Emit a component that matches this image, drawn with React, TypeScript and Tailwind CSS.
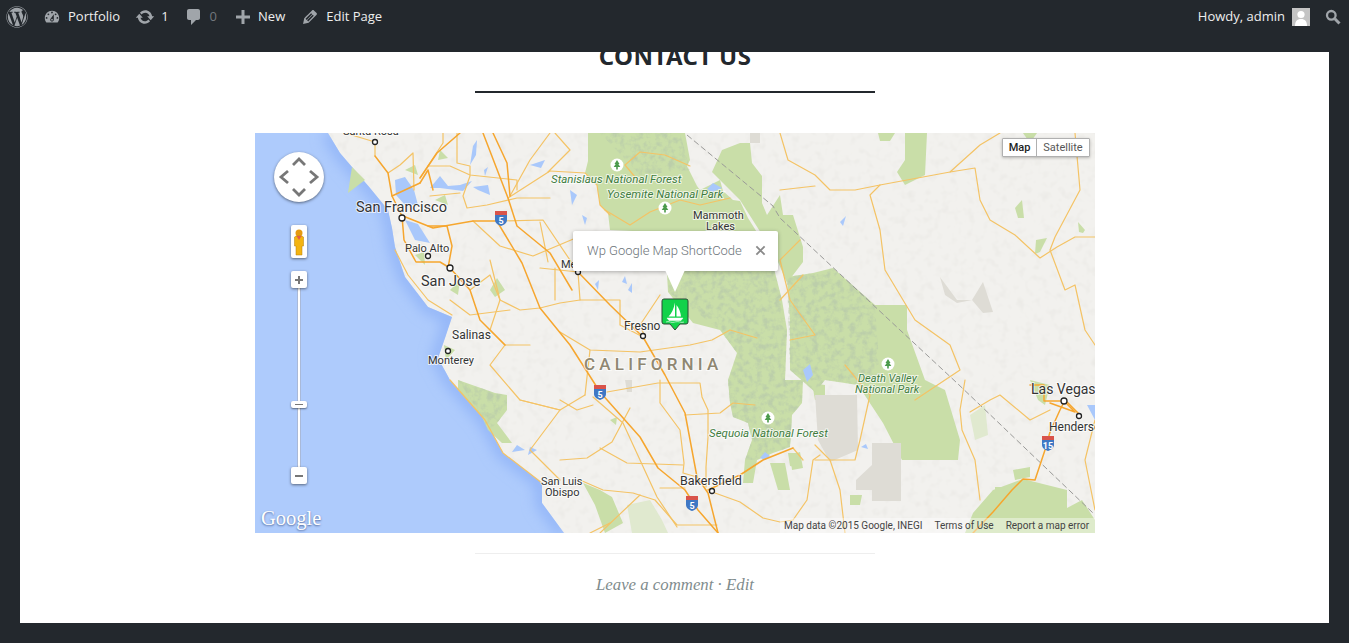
import React from 'react';
import { FaWordpress } from 'react-icons/fa';

const Dash: React.FC<{ d: string; className: string }> = ({ d, className }) => (
  <svg viewBox="0 0 20 20" className={className} fill="currentColor">
    <path fillRule="evenodd" clipRule="evenodd" d={d} />
  </svg>
);

const AdminBar = () => (
  <div className="h-[52px] flex items-start justify-between text-[13px] text-[#eeeeee] font-['Open_Sans',sans-serif]">
    <div className="h-[33px] flex items-center text-[#a0a5aa]">
      <FaWordpress className="ml-[6px] w-[22px] h-[22px]" />
      <Dash className="ml-[15px] w-[18px] h-[18px]" d="M3.76 16h12.48c1.1-1.37 1.76-3.11 1.76-5 0-4.42-3.58-8-8-8s-8 3.58-8 8c0 1.89.66 3.63 1.76 5zM10 4c.55 0 1 .45 1 1s-.45 1-1 1-1-.45-1-1 .45-1 1-1zM6 6c.55 0 1 .45 1 1s-.45 1-1 1-1-.45-1-1 .45-1 1-1zm8 0c.55 0 1 .45 1 1s-.45 1-1 1-1-.45-1-1 .45-1 1-1zm-5.37 5.55L12 7v6c0 1.1-.9 2-2 2s-2-.9-2-2c0-.57.24-1.08.63-1.45zM4 10c.55 0 1 .45 1 1s-.45 1-1 1-1-.45-1-1 .45-1 1-1zm12 0c.55 0 1 .45 1 1s-.45 1-1 1-1-.45-1-1 .45-1 1-1zm-5 3c0-.55-.45-1-1-1s-1 .45-1 1 .45 1 1 1 1-.45 1-1z" />
      <span className="ml-[7px] text-[#eeeeee]">Portfolio</span>
      <Dash className="ml-[15px] w-[20px] h-[20px]" d="M10.2 3.28c3.53 0 6.43 2.61 6.92 6h2.08l-3.5 4-3.5-4h2.32c-.45-1.97-2.21-3.45-4.32-3.45-1.45 0-2.73.71-3.54 1.78L4.95 5.66C6.23 4.2 8.11 3.28 10.2 3.28zm-.4 13.44c-3.52 0-6.43-2.61-6.92-6H.8l3.5-4c1.17 1.33 2.33 2.67 3.5 4H5.48c.45 1.97 2.21 3.45 4.32 3.45 1.45 0 2.73-.71 3.54-1.78l1.71 1.95c-1.28 1.46-3.15 2.38-5.25 2.38z" />
      <span className="ml-[6px] text-[#eeeeee]">1</span>
      <Dash className="ml-[15px] w-[20px] h-[20px]" d="M5 2h9c1.1 0 2 .9 2 2v7c0 1.1-.9 2-2 2h-2l-5 5v-5H5c-1.1 0-2-.9-2-2V4c0-1.1.9-2 2-2z" />
      <span className="ml-[6px] text-[#72777c]">0</span>
      <Dash className="ml-[16px] w-[20px] h-[20px]" d="M17 8.5v3h-5.5V17h-3v-5.5H3v-3h5.5V3h3v5.5H17z" />
      <span className="ml-[5px] text-[#eeeeee]">New</span>
      <Dash className="ml-[15px] w-[20px] h-[20px]" d="M13.89 3.39l2.71 2.72c.46.46.42 1.24.03 1.64l-8.01 8.02-5.56 1.16 1.16-5.58s7.6-7.63 8.01-8.03c.39-.39 1.22-.39 1.66.07zm-2.73 2.79l-5.59 5.61 1.11 1.11 5.54-5.65zm-2.97 8.23l5.58-5.6-1.07-1.08-5.59 5.6z" />
      <span className="ml-[6px] text-[#eeeeee]">Edit Page</span>
    </div>
    <div className="h-[33px] flex items-center pr-2">
      <span>Howdy, admin</span>
      <span className="ml-[7px] w-[18px] h-[18px] bg-[#c4c4c4] overflow-hidden">
        <svg viewBox="0 0 18 18" className="w-full h-full" fill="#ffffff">
          <circle cx="9" cy="6.5" r="3.6" />
          <path d="M3 18c0-4.5 2-7 6-7s6 2.500 6 7z" />
        </svg>
      </span>
      <svg viewBox="0 0 16 16" className="ml-[15px] w-[16px] h-[16px] text-[#a0a5aa]" fill="none" stroke="currentColor">
        <circle cx="6.300" cy="6.300" r="4.300" strokeWidth="2.300" />
        <path d="M9.800 9.800L14.500 14.500" strokeWidth="3" />
      </svg>
    </div>
  </div>
);

const Place: React.FC<{ x: number; y: number; className: string; children: React.ReactNode }> = ({ x, y, className, children }) => (
  <text x={x} y={y} className={`[paint-order:stroke] stroke-white/70 stroke-[2px] ${className}`}>{children}</text>
);

const Dot: React.FC<{ x: number; y: number; r?: number }> = ({ x, y, r = 2.500 }) => (
  <circle cx={x} cy={y} r={r} fill="#ffffff" stroke="#222222" strokeWidth="1.300" />
);

const Shield: React.FC<{ x: number; y: number; n: string }> = ({ x, y, n }) => (
  <g>
    <path d={`M${x - 6} ${y - 7}h12v4h-12z`} fill="#d9534a" />
    <path d={`M${x - 6} ${y - 3}h12v5c0 3-3 5-6 6-3-1-6-3-6-6z`} fill="#3f78c4" />
    <text x={x} y={y + 6} textAnchor="middle" className="text-[9px] font-bold fill-white">{n}</text>
  </g>
);

const Tree: React.FC<{ x: number; y: number }> = ({ x, y }) => (
  <g>
    <circle cx={x} cy={y} r="6.500" fill="#ffffff" />
    <path d={`M${x} ${y - 5}l2.500 4h-1.200l2 3h-2.500v2.500h-1.600v-2.500h-2.500l2-3h-1.200z`} fill="#4b9a4b" />
  </g>
);

const majorRoads = [
  'M375 156L388 173L392 196L402 216L404 240L416 262L440 262L450 268L470 290L480 320L505 345',
  'M420 178L437 153L460 133',
  'M483 133L508 198L517 226L550 253L572 290',
  'M493 133L507 163L510 196',
  'M498 223L522 263L540 308L570 345L600 392L640 437L658 468L685 490L698 510L718 533',
  'M578 272L610 305L643 337L665 375L685 413L697 477L708 493L718 533',
  'M428 226L447 226L452 246L448 268',
  'M403 216L433 228L473 221L497 221',
  'M420 183L428 170L433 190',
  'M392 196L420 183',
  'M708 490L740 475L763 460L793 448',
  'M973 533L993 512L1012 490L1023 479L1035 480L1045 450L1050 432',
  'M1050 432L1060 410L1065 400L1080 415',
  'M1064 401L1044 401L1044 385L1030 385',
  'M1050 403L1075 412L1064 401',
];

const minorRoads = [
  'M345 133L375 142L375 156',
  'M388 173L400 165L413 153L414 190',
  'M443 133L443 143L420 178',
  'M428 166L450 166L470 175L517 180L517 190',
  'M457 133L457 163L470 166L470 176L463 196L467 208L487 205L517 198L550 198',
  'M430 196L460 193',
  'M508 198L550 171',
  'M473 221L500 246L533 256L590 232',
  'M500 221L543 220L578 272',
  'M510 196L530 160L550 133',
  'M550 171L585 173L597 185L600 205L610 215',
  'M555 133L570 150L548 172',
  'M640 183L625 165L640 152L665 155L690 166',
  'M605 210L630 225L650 212L680 200L700 205L730 198',
  'M540 268L578 272L580 300L620 300L620 325L643 337',
  'M540 308L560 303L580 300',
  'M555 268L555 300',
  'M540 222L548 262',
  'M560 332L590 350L640 352L690 345L712 340L730 330L757 338',
  'M590 350L585 395',
  'M660 295L640 325L645 337',
  'M607 392L658 383L700 383L702 397L708 410L708 437L706 467L706 487',
  'M685 415L720 413L733 403L755 405',
  'M593 397L623 423L640 460L657 497L677 527',
  'M630 408L612 442L587 458L560 460',
  'M600 448L627 463L683 465',
  'M660 380L660 403L680 430L684 463L683 473L697 477',
  'M560 400L577 410L593 405',
  'M580 480L603 490L633 493L655 500L677 525L717 525',
  'M660 488L685 488',
  'M715 493L740 502L763 518L780 522L793 520L807 500L813 460L820 455',
  'M793 448L803 460',
  'M610 523L590 533',
  'M640 495L600 533',
  'M780 133L788 160L815 175L830 190L855 190L880 185L950 172L980 145L1000 133',
  'M780 190L815 186',
  'M880 185L870 195L880 230L885 270L915 320L950 345L960 370L915 400',
  'M950 172L975 168L980 200L990 220L1015 235L1040 258L1057 247L1075 237L1095 237',
  'M1075 133L1080 190L1055 237L1050 250L1065 290L1075 285L1085 330L1095 345',
  'M790 340L815 335L790 300L780 260L800 240',
  'M803 275L780 300',
  'M815 445L830 460L840 490L845 533',
  'M845 365L870 395L860 440L855 460L815 460',
  'M965 380L960 410L962 430L975 460L980 500',
  'M970 412L990 400L1000 395L1030 420L1050 410',
  'M1095 420L1085 460L1095 510',
  'M490 260L500 300L520 310L540 308',
  'M500 300L490 330L505 345L530 345',
  'M505 345L490 365L520 400L560 410L585 395',
  'M520 400L560 410L530 450L560 480',
  'M450 300L470 315L510 310',
  'M450 380L485 420L503 453L542 483',
  'M395 250L408 275L428 300L452 315',
  'M470 290L490 275L500 300',
];

const lakes = [
  'M395 180L405 177L414 190L418 205L405 205L396 195z',
  'M405 220L418 224L430 243L415 240z',
  'M430 188L440 176L448 186L460 185L472 181L463 191L440 188z',
  'M473 146L477 140L476 155L470 165z',
  'M473 187L488 185L490 195L478 190z',
  'M484 170L488 167L485 176z',
  'M530 165L545 160L541 168z',
  'M713 183L722 188L712 192L707 189z',
  'M595 284L599 280L598 290z',
  'M622 282L625 276L627 284z',
  'M640 236L646 232L644 242z',
  'M803 370L810 364L813 375L807 382z',
  'M840 222L846 216L843 226z',
  'M760 458L765 452L770 456L765 460z',
  'M1087 405L1095 405L1095 420z',
  'M517 445L525 450L512 452zM530 447L537 450L528 455z',
  'M861 447L866 444L868 449z',
  'M570 190L577 195L572 205z',
  'M582 215L587 218L585 225z',
  'M628 290L632 283L632 293z',
  'M608 250L613 255L608 260z',
];

const COAST = 'M328 133L340 153L352 167L370 188L388 210L392 228L395 247L405 277L428 307L452 317L445 338L438 358L450 380L485 420L503 453L542 483L542 503L564 533';

const MapDrawing = () => (
  <svg viewBox="255 133 840 400" className="absolute inset-0 w-full h-full font-['Roboto',sans-serif]">
    <defs>
      <filter id="hills" x="0" y="0" width="100%" height="100%">
        <feTurbulence type="fractalNoise" baseFrequency="0.16" numOctaves="3" seed="4" />
        <feColorMatrix values="0 0 0 0 0.50  0 0 0 0 0.62  0 0 0 0 0.40  0 0 0 3 -1.300" />
        <feComposite in2="SourceAlpha" operator="in" />
      </filter>
      <filter id="grain" x="0" y="0" width="100%" height="100%">
        <feTurbulence type="fractalNoise" baseFrequency="0.12" numOctaves="2" seed="9" />
        <feColorMatrix values="0 0 0 0 0.82  0 0 0 0 0.81  0 0 0 0 0.78  0 0 0 2 -1" />
        <feComposite in2="SourceAlpha" operator="in" />
      </filter>
      <filter id="soft"><feGaussianBlur stdDeviation="7" /></filter>
      <clipPath id="sea">
        <path d={`${COAST}L255 533L255 133z`} />
      </clipPath>
    </defs>

    <rect x="255" y="133" width="840" height="400" fill="#f2f1ee" />
    <rect x="255" y="133" width="840" height="400" filter="url(#grain)" />

    <path d={`${COAST}L255 533L255 133z`} fill="#aecbfc" />
    <g clipPath="url(#sea)">
      <path d={COAST} fill="none" stroke="#8fb2f7" strokeWidth="12" filter="url(#soft)" />
    </g>

    {/* parks and forests */}
    <g fill="#c9dea8">
      <path d="M588 133L685 133L690 160L687 166L697 186L700 190L720 180L723 191L733 200L740 201L748 218L770 253L782 300L787 330L785 380L803 380L802 403L792 415L790 447L773 453L757 460L753 483L743 483L745 460L752 440L748 423L733 417L730 403L728 380L737 353L720 330L693 323L668 292L667 273L655 232L610 230L608 213L600 205L597 185L585 173L588 161z" />
      <path d="M722 150L740 143L750 143L752 163L762 176L762 203L767 215L780 195L783 215L793 215L803 247L803 262L787 283L775 255L740 200L712 172z" />
      <path d="M787 277L813 273L833 268L875 305L907 305L907 330L925 380L945 390L960 440L958 460L902 460L883 423L858 385L825 380L815 392L790 370L790 320z" />
      <path d="M897 172L905 160L905 133L927 133L925 175L905 185z" />
      <path d="M878 133L895 133L890 141L880 141z" />
      <path d="M1015 208L1022 200L1024 218L1018 218z" />
      <path d="M1036 240L1047 238L1040 252L1035 254z" />
      <path d="M1078 222L1085 230L1083 233L1079 232z" />
      <path d="M973 513L993 490L1023 479L1067 490L1067 508L1082 500L1095 520L1095 533L965 533z" />
      <path d="M458 380L495 393L507 395L507 410L497 423L512 443L502 443L488 430L482 417L458 390z" />
      <path d="M352 167L365 180L348 193z" />
      <path d="M583 483L600 490L612 497L623 523L605 533L595 505z" />
      <path d="M770 463L785 463L790 490L778 490z" />
      <path d="M790 455L800 452L803 468L792 470z" />
      <path d="M812 383L825 385L825 398L815 400z" />
      <path d="M788 453L800 453L800 468L790 466z" />
      <path d="M995 487L1005 487L1002 495L995 495z" />
      <path d="M1013 470L1030 467L1030 477L1015 480z" />
      <path d="M850 495L862 495L860 505L850 505z" />
      <path d="M1030 380L1050 385L1045 405L1038 400z" />
      <path d="M415 255L424 252L425 265z" />
      <path d="M444 345L455 350L446 360z" />
      <path d="M490 290L497 278L505 290L495 297z" />
      <path d="M405 170L415 165L418 175z" />
      <path d="M440 150L448 158L438 160z" />
      <path d="M435 200L445 195L448 205z" />
      <path d="M450 290L460 280L458 295z" />
      <path d="M1023 133L1037 133L1030 143z" />
      <path d="M610 420L617 417L616 425z" />
    </g>
    <g fill="#e0e9cf">
      <path d="M627 505L650 500L662 520L668 533L632 533z" />
      <path d="M970 415L985 405L988 435L975 440z" />
    </g>
    <g filter="url(#hills)">
      <path d="M680 300L668 292L667 273L770 253L782 300L787 330L785 380L803 380L802 403L792 415L790 447L773 453L757 460L745 460L752 440L748 423L733 417L730 403L728 380L737 353L720 330z" />
      <path d="M787 277L813 273L833 268L875 305L880 375L858 385L825 380L815 392L790 370z" />
      <path d="M600 133L680 133L690 170L640 175z" />
      <path d="M458 380L495 393L507 395L507 410L497 423L488 430L482 417z" />
    </g>

    {/* dry lake beds and military land */}
    <g fill="#dedcd5">
      <path d="M815 395L857 395L858 450L830 462L818 440z" />
      <path d="M872 443L901 443L901 501L872 501L872 490L856 490L856 480L872 465z" />
      <path d="M940 277L957 300L972 300L983 282L993 312L983 313L972 300L957 303L945 295z" />
      <path d="M750 133L760 133L760 143L750 143z" />
      <path d="M625 380L632 380L632 392L627 392z" />
    </g>
    <g fill="#a9c8fb">
      {lakes.map((d, i) => <path key={i} d={d} />)}
    </g>

    {/* state line */}
    <path d="M687 135L773 206L780 218L900 330L957 383L1093 513" fill="none" stroke="#9a9a98" strokeWidth="1" strokeDasharray="6 3" />

    <g fill="none" strokeLinejoin="round" strokeLinecap="round">
      <g stroke="#f4c365" strokeWidth="1.200">
        {minorRoads.map((d, i) => <path key={i} d={d} />)}
      </g>
      <g stroke="#f6a62e" strokeWidth="1.500">
        {majorRoads.map((d, i) => <path key={i} d={d} />)}
      </g>
    </g>

    <Shield x={501} y={218} n="5" />
    <Shield x={600} y={392} n="5" />
    <Shield x={692} y={503} n="5" />
    <Shield x={1048} y={443} n="15" />

    <Tree x={617} y={165} />
    <Tree x={665} y={208} />
    <Tree x={768} y={418} />
    <Tree x={888} y={364} />

    <g className="fill-[#333333]">
      <Place x={343} y={135} className="text-[11px]">Santa Rosa</Place>
      <Place x={356} y={212} className="text-[14.500px]">San Francisco</Place>
      <Place x={405} y={252} className="text-[11px]">Palo Alto</Place>
      <Place x={421} y={286} className="text-[14.500px]">San Jose</Place>
      <Place x={452} y={339} className="text-[12px]">Salinas</Place>
      <Place x={428} y={364} className="text-[11px]">Monterey</Place>
      <Place x={561} y={268} className="text-[11px]">Merced</Place>
      <Place x={624} y={330} className="text-[12px]">Fresno</Place>
      <Place x={693} y={219} className="text-[11px]">Mammoth</Place>
      <Place x={706} y={230} className="text-[11px]">Lakes</Place>
      <Place x={541} y={485} className="text-[11px]">San Luis</Place>
      <Place x={545} y={496} className="text-[11px]">Obispo</Place>
      <Place x={680} y={485} className="text-[12.500px]">Bakersfield</Place>
      <Place x={1031} y={394} className="text-[14px]">Las Vegas</Place>
      <Place x={1049} y={431} className="text-[12px]">Henderson</Place>
    </g>
    <g className="fill-[#3f7d3f] italic">
      <Place x={551} y={183} className="text-[11.500px]">Stanislaus National Forest</Place>
      <Place x={607} y={198} className="text-[11.500px]">Yosemite National Park</Place>
      <Place x={709} y={437} className="text-[11.500px]">Sequoia National Forest</Place>
      <Place x={858} y={382} className="text-[11px]">Death Valley</Place>
      <Place x={855} y={393} className="text-[11px]">National Park</Place>
    </g>
    <Place x={584} y={370} className="fill-[#8f8772] text-[17px] font-medium tracking-[4.200px]">CALIFORNIA</Place>

    <Dot x={375} y={142} />
    <Dot x={402} y={218} r={3} />
    <Dot x={428} y={256} />
    <Dot x={450} y={268} r={3} />
    <Dot x={448} y={351} />
    <Dot x={578} y={272} />
    <Dot x={643} y={336} />
    <Dot x={712} y={491} />
    <Dot x={1064} y={401} r={3} />
    <Dot x={1079} y={416} />
  </svg>
);

const Marker = () => (
  <svg viewBox="0 0 28 34" className="absolute left-[406px] top-[165px] w-[28px] h-[34px]">
    <path d="M3 1h22a2 2 0 0 1 2 2v21a2 2 0 0 1-2 2h-6l-5 6-5-6H3a2 2 0 0 1-2-2V3a2 2 0 0 1 2-2z" fill="#12d24a" stroke="#2b4a35" strokeWidth="1" />
    <path d="M14 4.500v14H7.500c3-3 5.500-8 6.500-14zM15.500 7c2.500 3 4 7 4.500 11.500h-4.500z" fill="#ffffff" />
    <path d="M6 20h16l-2 2.500H8zM5 24c3-1 5 1 9 0s6 1 9 0" fill="#ffffff" stroke="#ffffff" strokeWidth="0.500" />
  </svg>
);

const InfoWindow = () => (
  <div className="absolute left-[318px] top-[98px] w-[205px] h-[40px] bg-white rounded-[2px] shadow-[0_1px_4px_rgba(0,0,0,0.3)] flex items-center justify-between pl-[14px] pr-[12px] font-['Roboto',sans-serif] font-light text-[13px] text-[#6c7479]">
    <span>Wp Google Map ShortCode</span>
    <svg viewBox="0 0 12 12" className="w-[11px] h-[11px] mb-[2px]" stroke="#8a8a8a" strokeWidth="2">
      <path d="M1.500 1.500L10.500 10.500M10.500 1.500L1.500 10.500" />
    </svg>
    <svg viewBox="0 0 20 22" className="absolute left-[92px] top-[39px] w-[20px] h-[22px]">
      <path d="M0 0H20L10 22z" fill="#ffffff" />
    </svg>
  </div>
);

const PanControl = () => (
  <div className="absolute left-[19px] top-[19px] w-[50px] h-[50px] rounded-full bg-white shadow-[0_1px_3px_rgba(0,0,0,0.5)]">
    <svg viewBox="0 0 50 50" className="w-full h-full" fill="none" stroke="#777777" strokeWidth="2.800">
      <path d="M19 13l6-6 6 6M19 37l6 6 6-6M14 19l-7 6 7 6M36 19l7 6-7 6" />
    </svg>
  </div>
);

const ZoomControl = () => (
  <>
    <div className="absolute left-[36px] top-[92px] w-[16px] h-[33px] bg-white rounded-[2px] shadow-[0_1px_3px_rgba(0,0,0,0.5)]">
      <svg viewBox="0 0 16 33" className="w-full h-full">
        <circle cx="8" cy="8" r="3.500" fill="#e59a12" />
        <path d="M5 11h6l1.500 1v9h-1.500v9h-6v-9H3.500v-9z" fill="#f3b412" stroke="#b57e0e" strokeWidth="0.500" />
        <path d="M5.500 11h5L8 15z" fill="#e35b4d" />
      </svg>
    </div>
    <div className="absolute left-[42px] top-[154px] w-[4px] h-[181px] bg-white border-x border-[#a9b9d8]" />
    <div className="absolute left-[36px] top-[138px] w-[16px] h-[17px] bg-white rounded-[2px] shadow-[0_1px_3px_rgba(0,0,0,0.5)] flex items-center justify-center">
      <svg viewBox="0 0 8 8" className="w-[8px] h-[8px]" fill="#777777"><path d="M3 0h2v3h3v2H5v3H3V5H0V3h3z" /></svg>
    </div>
    <div className="absolute left-[36px] top-[268px] w-[16px] h-[7px] bg-white rounded-[2px] shadow-[0_1px_2px_rgba(0,0,0,0.5)] flex items-center justify-center">
      <div className="w-[8px] h-px bg-[#777777]" />
    </div>
    <div className="absolute left-[36px] top-[334px] w-[16px] h-[17px] bg-white rounded-[2px] shadow-[0_1px_3px_rgba(0,0,0,0.5)] flex items-center justify-center">
      <div className="w-[8px] h-[2px] bg-[#777777]" />
    </div>
  </>
);

const MapType = () => (
  <div className="absolute left-[747px] top-[5px] h-[19px] flex bg-white border border-[#b0b0b0] rounded-[1px] shadow-[0_1px_3px_rgba(0,0,0,0.25)] text-[11px] leading-[17px] font-['Roboto',sans-serif]">
    <span className="w-[34px] text-center font-medium text-[#222222] border-r border-[#b0b0b0]">Map</span>
    <span className="w-[52px] text-center text-[#565656]">Satellite</span>
  </div>
);

const GoogleMap = () => (
  <div className="relative w-[840px] h-[400px] mt-[40px] overflow-hidden shrink-0">
    <MapDrawing />
    <PanControl />
    <ZoomControl />
    <MapType />
    <InfoWindow />
    <Marker />
    <span className="absolute left-[6px] top-[370px] font-['Liberation_Serif',serif] text-[20.500px] text-white [text-shadow:0_1px_2px_rgba(40,60,110,0.7)]">Google</span>
    <div className="absolute right-0 bottom-0 w-[315px] h-[15px] bg-white/40 pl-[4px] flex items-center text-[10px] text-[#444444] font-['Roboto',sans-serif]">
      <span>Map data ©2015 Google, INEGI</span>
      <span className="ml-[12px]">Terms of Use</span>
      <span className="ml-[12px]">Report a map error</span>
    </div>
  </div>
);

export default function App() {
  return (
    <div className="min-h-[643px] h-[643px] bg-[#23282d] overflow-hidden">
      <AdminBar />
      <div className="mx-5 h-[571px] bg-white overflow-hidden">
        <div className="ml-[235px] w-[840px] flex flex-col items-center">
          <h1 className="mt-[-16px] h-[40px] leading-[40px] text-[24px] font-bold tracking-[0.400px] text-[#23282d] font-['Noto_Sans',sans-serif]">CONTACT US</h1>
          <div className="w-[400px] h-[2px] mt-[15px] bg-[#23282d]" />
          <GoogleMap />
          <div className="w-[400px] h-px mt-[20px] bg-[#eeeeee]" />
          <p className="mt-[18px] text-[16.800px] italic text-[#7f8c8d] font-['Liberation_Serif',serif]">Leave a comment · Edit</p>
        </div>
      </div>
    </div>
  );
}
